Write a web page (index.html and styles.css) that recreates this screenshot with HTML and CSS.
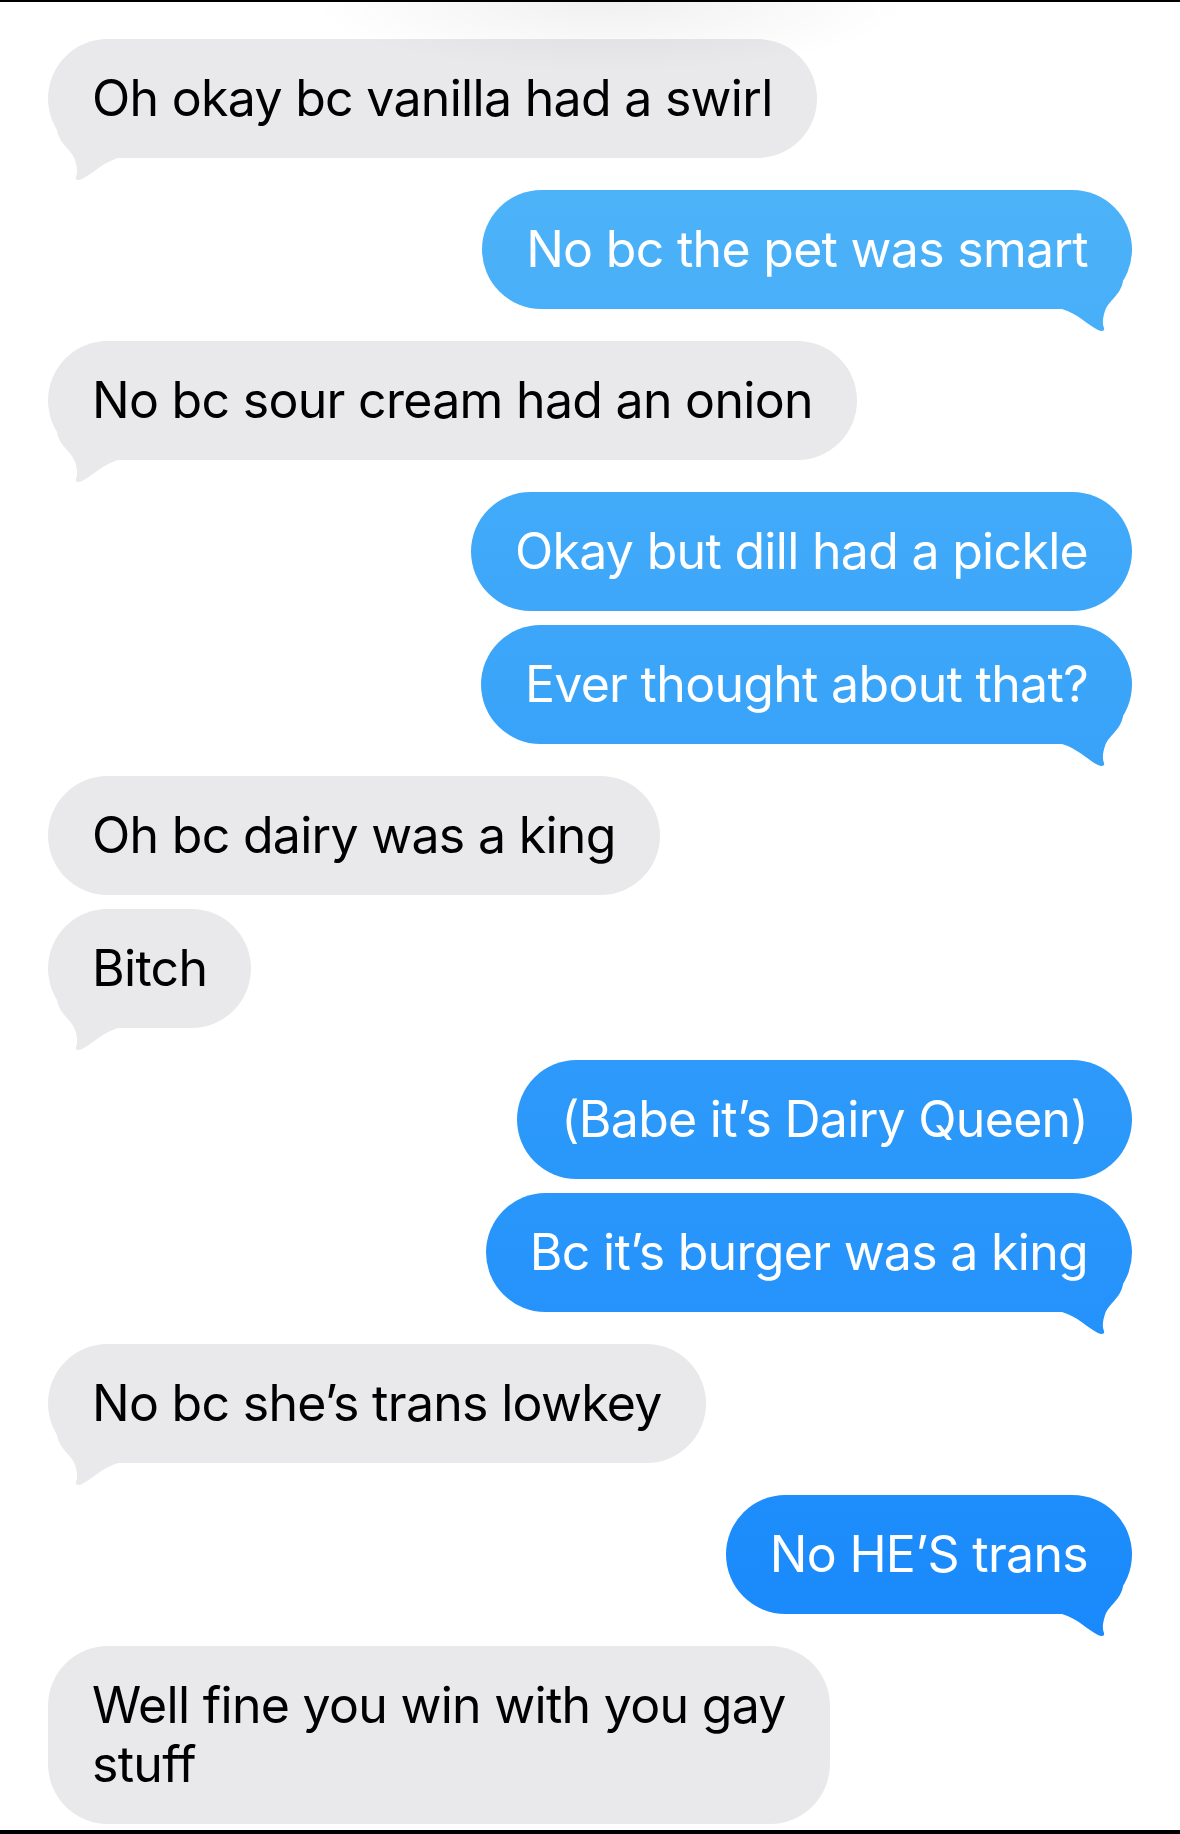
FILE: index.html
```html
<!DOCTYPE html>
<html lang="en">
<head>
    <meta charset="UTF-8">
    <meta name="viewport" content="width=device-width, initial-scale=1.0">
    <title>Messages</title>
    <link rel="stylesheet" href="styles.css">
</head>
<body>

<!-- Conversation thread -->
<div class="thread">
    <div class="bubble them tail">Oh okay bc vanilla had a swirl<span class="tail-shape"></span></div>
    <div class="bubble me tail">No bc the pet was smart<span class="tail-shape"></span></div>
    <div class="bubble them tail">No bc sour cream had an onion<span class="tail-shape"></span></div>
    <div class="bubble me">Okay but dill had a pickle</div>
    <div class="bubble me tail grouped">Ever thought about that?<span class="tail-shape"></span></div>
    <div class="bubble them">Oh bc dairy was a king</div>
    <div class="bubble them tail grouped">Bitch<span class="tail-shape"></span></div>
    <div class="bubble me">(Babe it’s Dairy Queen)</div>
    <div class="bubble me tail grouped">Bc it’s burger was a king<span class="tail-shape"></span></div>
    <div class="bubble them tail">No bc she’s trans lowkey<span class="tail-shape"></span></div>
    <div class="bubble me tail">No HE’S trans<span class="tail-shape"></span></div>
    <div class="bubble them">Well fine you win with you gay<br>stuff</div>
</div>

</body>
</html>
```

FILE: styles.css
```css
/* Page */
html, body {
    margin: 0;
    padding: 0;
    background: #fff;
}

body {
    font-family: Inter, "Noto Sans", sans-serif;
    font-size: 50px;
    letter-spacing: -0.7px;
    -webkit-font-smoothing: antialiased;
}

/* Thread fills the window, framed by the black edges of the screenshot */
.thread {
    position: relative;
    height: 100vh;
    box-sizing: border-box;
    border-top: 2px solid #000;
    border-bottom: 4px solid #000;
    padding: 37px 48px 0;
    display: flex;
    flex-direction: column;
    overflow: hidden;
}

.thread::after {
    content: "";
    position: absolute;
    top: 0;
    left: 0;
    right: 0;
    height: 90px;
    background: radial-gradient(ellipse 300px 70px at 610px 0, rgba(0, 0, 0, 0.06), rgba(0, 0, 0, 0));
    pointer-events: none;
}

/* Bubbles */
.bubble {
    position: relative;
    box-sizing: border-box;
    padding: 30px 44px;
    line-height: 59px;
    border-radius: 60px;
    margin-top: 32px;
    max-width: 880px;
}

.bubble:first-child {
    margin-top: 0;
}

.bubble.grouped {
    margin-top: 14px;
}

.them {
    align-self: flex-start;
    background-color: #e9e9eb;
    color: #000;
}

.me {
    align-self: flex-end;
    color: #fff;
    background: linear-gradient(180deg, #53b8f8 0%, #1284fc 100%) fixed;
}

/* Tail under the last bubble of a group */
.tail-shape {
    display: none;
    position: absolute;
    bottom: -22px;
    width: 70px;
    height: 50px;
}

.tail .tail-shape {
    display: block;
}

.them .tail-shape {
    left: 0;
    background-color: #e9e9eb;
    clip-path: path("M 9 0 C 11 14, 24 20, 27 30 C 29 36, 30 42, 28 47 C 27 50, 30 51, 34 49 C 43 45, 55 32, 70 28 L 70 0 Z");
}

.me .tail-shape {
    right: 0;
    background: linear-gradient(180deg, #53b8f8 0%, #1284fc 100%) fixed;
    clip-path: path("M 61 0 C 59 14, 46 20, 43 30 C 41 36, 40 42, 42 47 C 43 50, 40 51, 36 49 C 27 45, 15 32, 0 28 L 0 0 Z");
}
```
